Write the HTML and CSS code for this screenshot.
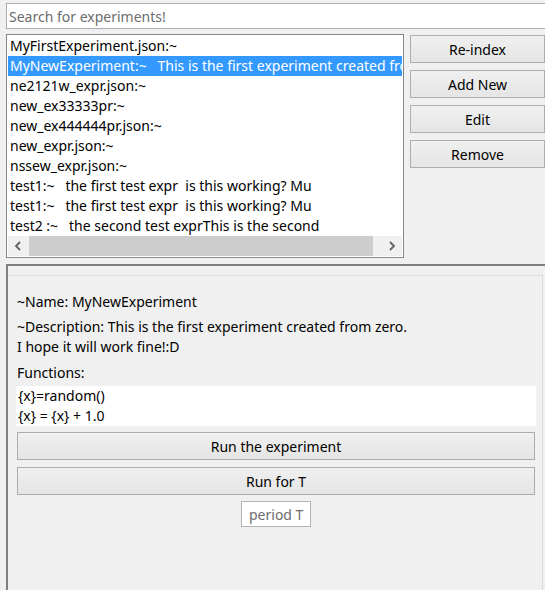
FILE: index.html
```html
<!DOCTYPE html>
<html>
<head>
<meta charset="utf-8">
<link rel="stylesheet" href="styles.css">
</head>
<body>
<div class="app">
  <input class="search" type="text" placeholder="Search for experiments!">
  <div class="top">
    <div class="list">
      <div class="rows">
        <div class="row">MyFirstExperiment.json:~</div>
        <div class="row sel">MyNewExperiment:~   This is the first experiment created from zero.</div>
        <div class="row">ne2121w_expr.json:~</div>
        <div class="row">new_ex33333pr:~</div>
        <div class="row">new_ex444444pr.json:~</div>
        <div class="row">new_expr.json:~</div>
        <div class="row">nssew_expr.json:~</div>
        <div class="row">test1:~   the first test expr  is this working? Mu</div>
        <div class="row">test1:~   the first test expr  is this working? Mu</div>
        <div class="row">test2 :~   the second test exprThis is the second</div>
      </div>
      <div class="hscroll">
        <span class="arrow"><svg width="8" height="10" viewBox="0 0 8 10"><path d="M6 1 L2 5 L6 9" fill="none" stroke="#606060" stroke-width="1.8"/></svg></span>
        <span class="thumb"></span>
        <span class="track"></span>
        <span class="arrow"><svg width="8" height="10" viewBox="0 0 8 10"><path d="M2 1 L6 5 L2 9" fill="none" stroke="#606060" stroke-width="1.8"/></svg></span>
      </div>
    </div>
    <div class="actions">
      <button class="btn">Re-index</button>
      <button class="btn">Add New</button>
      <button class="btn">Edit</button>
      <button class="btn">Remove</button>
    </div>
  </div>
  <div class="details">
    <div class="inner">
      <p class="name">~Name: MyNewExperiment</p>
      <p class="desc">~Description: This is the first experiment created from zero.<br>I hope it will work fine!:D</p>
      <p class="fnlabel">Functions:</p>
      <div class="funcs">
        <div class="fn">{x}=random()</div>
        <div class="fn">{x} = {x} + 1.0</div>
      </div>
      <button class="btn wide first">Run the experiment</button>
      <button class="btn wide second">Run for T</button>
      <input class="period" type="text" placeholder="period T">
    </div>
  </div>
</div>
</body>
</html>
```
FILE: styles.css
```css
html, body {
  margin: 0;
  height: 100%;
  overflow: hidden;
}
body {
  background: #f0f0f0;
  font-family: "Noto Sans", "Open Sans", sans-serif;
  font-size: 14px;
  color: #000;
}
.app {
  display: flex;
  flex-direction: column;
  height: 590px;
}
.search {
  display: block;
  box-sizing: border-box;
  height: 26px;
  margin: 3px -10px 0 6px;
  padding: 0 2px;
  border: 1px solid #abadb3;
  background: #fff;
  font: inherit;
  outline: none;
}
.search::placeholder, .period::placeholder {
  color: #6d6d6d;
  opacity: 1;
}
.top {
  display: flex;
  gap: 6px;
  margin-top: 5px;
  padding-left: 6px;
}
.list {
  box-sizing: border-box;
  width: 398px;
  height: 224px;
  flex-shrink: 0;
  border: 1px solid #828790;
  padding: 1px;
  background: #fff;
  display: flex;
  flex-direction: column;
}
.rows {
  flex: 1;
  overflow: hidden;
}
.row {
  height: 20px;
  line-height: 20px;
  padding-left: 2px;
  white-space: pre;
  overflow: hidden;
}
.row.sel {
  background: #3399ff;
  color: #fff;
}
.hscroll {
  display: flex;
  height: 20px;
  background: #f0f0f0;
}
.arrow {
  width: 20px;
  display: flex;
  align-items: center;
  justify-content: center;
}
.thumb {
  width: 344px;
  margin-left: 1px;
  background: #cdcdcd;
}
.track {
  flex: 1;
}
.actions {
  display: flex;
  flex-direction: column;
  gap: 7px;
  padding-top: 1px;
  width: 135px;
  flex-shrink: 0;
}
.btn {
  box-sizing: border-box;
  height: 28px;
  border: 1px solid #adadad;
  background: linear-gradient(#f0f0f0, #e5e5e5);
  font: inherit;
  color: #000;
  padding: 0;
  margin: 0;
}
.details {
  flex: 1;
  margin: 6px 0 0 6px;
  border-top: 2px solid #7e7e7e;
  border-left: 2px solid #7e7e7e;
  padding: 9px 0 0 1px;
  display: flex;
  flex-direction: column;
}
.inner {
  flex: 1;
  margin-right: 2px;
  border-top: 1px solid #dadada;
  border-right: 1px solid #dadada;
  padding: 16px 7px 0 8px;
  display: flex;
  flex-direction: column;
}
.inner p {
  margin: 0;
  line-height: 20px;
}
.desc {
  margin-top: 5px !important;
}
.fnlabel {
  margin-top: 6px !important;
}
.funcs {
  margin: 3px -1px 0;
  background: #fff;
  padding: 0 2px;
}
.fn {
  height: 20px;
  line-height: 20px;
}
.wide {
  width: 100%;
}
.wide.first {
  margin-top: 6px;
}
.wide.second {
  margin-top: 7px;
}
.period {
  box-sizing: border-box;
  width: 70px;
  height: 26px;
  margin: 6px auto 0;
  padding: 0 0 0 7px;
  border: 1px solid #b4b4b4;
  background: #fff;
  font: inherit;
  outline: none;
}
```
